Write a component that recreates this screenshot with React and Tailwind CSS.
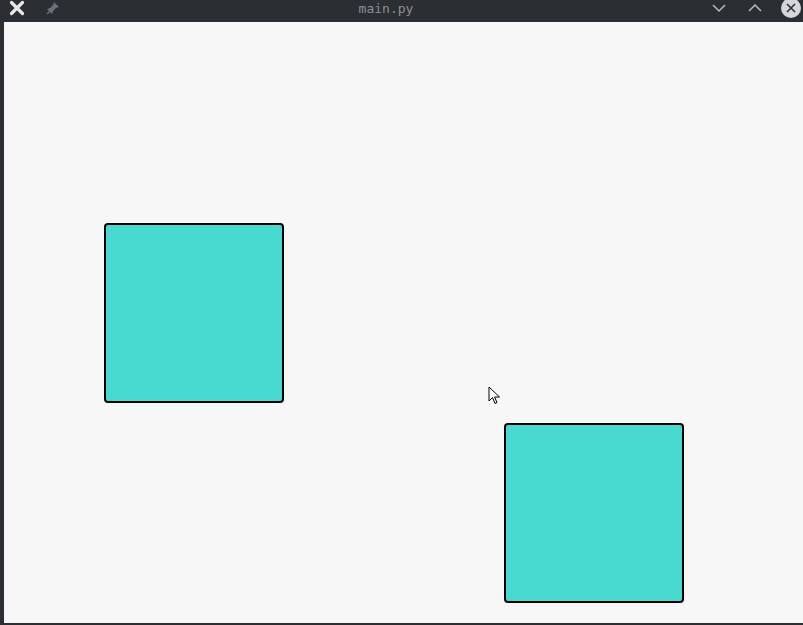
const CloseX = () => (
  <svg width="16" height="16" viewBox="0 0 16 16">
    <path d="M2.5 2.5 L13.5 13.5 M13.5 2.5 L2.5 13.5" stroke="#e8e8e8" strokeWidth="3.2" strokeLinecap="round" />
  </svg>
);

const Pin = () => (
  <svg width="14" height="14" viewBox="0 0 14 14">
    <path d="M8 1 L13 6 L10 7 L7 10 L6 13 L1 8 L4 7 L7 4 Z" fill="#6b6f76" />
    <path d="M4 10 L1 13" stroke="#6b6f76" strokeWidth="1.5" />
  </svg>
);

const Chevron = ({ up }) => (
  <svg width="14" height="10" viewBox="0 0 14 10">
    <path d={up ? "M1 8 L7 2 L13 8" : "M1 2 L7 8 L13 2"} fill="none" stroke="#b8bcc2" strokeWidth="1.5" />
  </svg>
);

const Cursor = () => (
  <svg width="14" height="20" viewBox="0 0 14 20">
    <path d="M1 1 L1 15 L4.5 11.5 L7 17.5 L9 16.6 L6.6 11 L11.5 11 Z" fill="#ffffff" stroke="#000000" strokeWidth="1" strokeLinejoin="round" />
  </svg>
);

export default function App() {
  return (
    <div className="w-[803px] h-[625px] flex flex-col bg-[#2b2e33] overflow-hidden">
      {/* Title bar */}
      <div className="h-[22px] flex items-center pb-[6px]">
        <div className="w-[34px] flex justify-center">
          <CloseX />
        </div>
        <div className="w-[38px] flex justify-center">
          <Pin />
        </div>
        <div className="flex-1 pr-[12px] text-center text-[13px] text-[#8c9096] font-['DejaVu_Sans_Mono',monospace] leading-none">
          main.py
        </div>
        <div className="flex items-center pr-[2px]">
          <Chevron />
          <div className="w-[22px]" />
          <Chevron up />
          <div className="w-[19px]" />
          <div className="w-[20px] h-[20px] rounded-full bg-[#d4d6d9] flex items-center justify-center">
            <svg width="10" height="10" viewBox="0 0 10 10">
              <path d="M1 1 L9 9 M9 1 L1 9" stroke="#2b2e33" strokeWidth="1.6" />
            </svg>
          </div>
        </div>
      </div>

      {/* Canvas */}
      <div className="flex-1 ml-[4px] mb-[2px] bg-[#f7f7f7] relative">
        <div className="absolute left-[100px] top-[201px] w-[180px] h-[180px] bg-[#48d9d1] border-2 border-black rounded-[4px]" />
        <div className="absolute left-[500px] top-[401px] w-[180px] h-[180px] bg-[#48d9d1] border-2 border-black rounded-[4px]" />
        <div className="absolute left-[484px] top-[364px]">
          <Cursor />
        </div>
      </div>
    </div>
  );
}
